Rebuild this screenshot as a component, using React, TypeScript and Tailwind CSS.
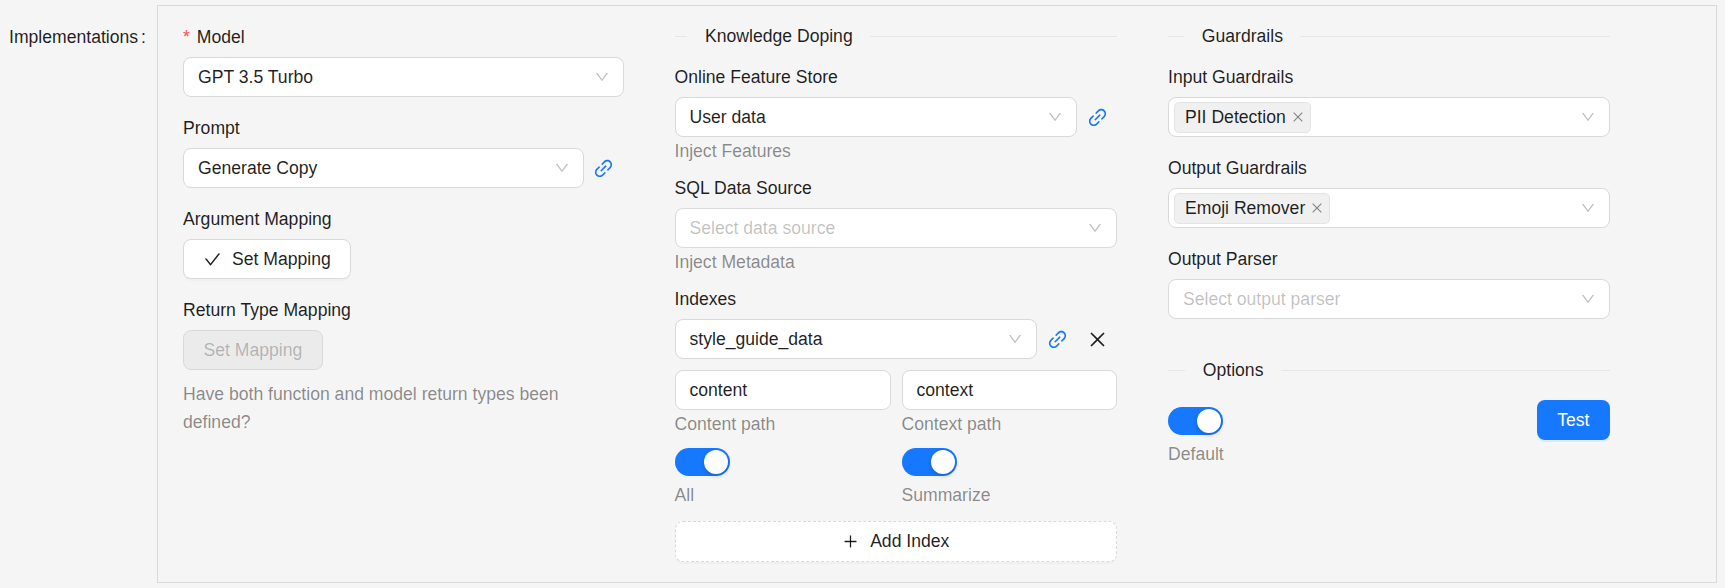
import React from "react";
import { AiOutlineCheck, AiOutlineClose, AiOutlineDown, AiOutlineLink, AiOutlinePlus } from "react-icons/ai";

function Select({
  value,
  placeholder,
  tag,
  className = "",
}: {
  value?: string;
  placeholder?: string;
  tag?: string;
  className?: string;
}) {
  return (
    <div
      className={`flex h-10 min-w-0 flex-1 items-center justify-between rounded-lg border border-[#d9d9d9] bg-white pr-[13px] ${
        tag ? "pl-[5px]" : "pl-[14px]"
      } ${className}`}
    >
      {tag ? (
        <span className="flex h-[31px] items-center gap-[5px] rounded-[5px] border border-[#e4e4e4] bg-[#f0f0f0] pl-[10px] pr-[5px] text-[rgba(0,0,0,0.88)]">
          {tag}
          <AiOutlineClose size={14} className="text-[rgba(0,0,0,0.45)]" />
        </span>
      ) : (
        <span className={value ? "text-[rgba(0,0,0,0.88)]" : "text-[rgba(0,0,0,0.25)]"}>{value || placeholder}</span>
      )}
      <AiOutlineDown size={16} className="text-[rgba(0,0,0,0.25)]" />
    </div>
  );
}

function LinkBtn() {
  return (
    <span className="flex h-10 w-10 shrink-0 items-center justify-center text-[#1677ff]">
      <AiOutlineLink size={23} />
    </span>
  );
}

function Label({ children }: { children: React.ReactNode }) {
  return <div className="h-6 leading-[26px] text-[rgba(0,0,0,0.88)]">{children}</div>;
}

function Field({
  label,
  extra,
  children,
  className = "mb-[18px]",
}: {
  label: React.ReactNode;
  extra?: string;
  children: React.ReactNode;
  className?: string;
}) {
  return (
    <div className={className}>
      <Label>{label}</Label>
      <div className="mt-[9px] flex items-center">{children}</div>
      {extra && <Extra>{extra}</Extra>}
    </div>
  );
}

function Extra({ children }: { children: React.ReactNode }) {
  return <div className="pt-[2px] leading-6 text-[rgba(0,0,0,0.45)]">{children}</div>;
}

function SectionTitle({ title, className = "" }: { title: string; className?: string }) {
  return (
    <div className={`flex h-6 items-center ${className}`}>
      <div className="flex-[5_5_0%] border-t border-[rgba(5,5,5,0.06)]" />
      <span className="px-[17.5px] leading-[26px] text-[rgba(0,0,0,0.88)]">{title}</span>
      <div className="flex-[95_95_0%] border-t border-[rgba(5,5,5,0.06)]" />
    </div>
  );
}

function Toggle({ label }: { label: string }) {
  return (
    <div>
      <div className="flex h-7 w-[55px] items-center justify-end rounded-full bg-[#1677ff] pr-[2px]">
        <span className="h-6 w-6 rounded-full bg-white shadow-[0_2px_4px_0_rgba(0,35,11,0.2)]" />
      </div>
      <div className="mt-[7px] leading-6 text-[rgba(0,0,0,0.45)]">{label}</div>
    </div>
  );
}

function TextInput({ value }: { value: string }) {
  return (
    <div className="flex h-10 items-center rounded-lg border border-[#d9d9d9] bg-white px-[14px] text-[rgba(0,0,0,0.88)]">
      {value}
    </div>
  );
}

export default function App() {
  return (
    <div
      className="flex min-h-[588px] items-start bg-[#f5f5f5] pt-[5px] text-[17.6px]"
      style={{ fontFamily: '"Liberation Sans", Arial, sans-serif' }}
    >
      <div className="flex h-[62px] w-[157px] items-start pl-[9px] pt-[20px] leading-6 text-[rgba(0,0,0,0.88)]">
        Implementations<span className="ml-[3px]">:</span>
      </div>

      <div className="grid w-[1560px] grid-cols-[440.5px_442.5px_442px] gap-x-[51px] border border-[#d9d9d9] pb-5 pl-[25px] pt-[18px]">
        {/* Model column */}
        <div>
          <Field
            label={
              <>
                <span className="mr-[2px] text-[#ff4d4f]">*</span> Model
              </>
            }
          >
            <Select value="GPT 3.5 Turbo" />
          </Field>
          <Field label="Prompt">
            <Select value="Generate Copy" />
            <LinkBtn />
          </Field>
          <Field label="Argument Mapping">
            <button className="flex h-10 items-center gap-[10px] rounded-lg border border-[#d9d9d9] bg-white px-[19px] text-[rgba(0,0,0,0.88)] shadow-[0_2px_0_rgba(0,0,0,0.02)]">
              <AiOutlineCheck size={19} />
              Set Mapping
            </button>
          </Field>
          <Field label="Return Type Mapping" className="mb-[11px]">
            <button
              disabled
              className="flex h-10 items-center rounded-lg border border-[#d9d9d9] bg-[rgba(0,0,0,0.04)] px-[19.5px] text-[rgba(0,0,0,0.25)]"
            >
              Set Mapping
            </button>
          </Field>
          <p className="leading-[27.5px] text-[rgba(0,0,0,0.45)]">Have both function and model return types been defined?</p>
        </div>

        {/* Knowledge doping column */}
        <div>
          <SectionTitle title="Knowledge Doping" className="mb-4" />
          <Field label="Online Feature Store" extra="Inject Features" className="mb-[12px]">
            <Select value="User data" />
            <LinkBtn />
          </Field>
          <Field label="SQL Data Source" extra="Inject Metadata" className="mb-[12px]">
            <Select placeholder="Select data source" />
          </Field>
          <Label>Indexes</Label>
          <div className="mt-[9px] flex items-center">
            <Select value="style_guide_data" />
            <LinkBtn />
            <span className="flex h-10 w-10 shrink-0 items-center justify-center text-[rgba(0,0,0,0.88)]">
              <AiOutlineClose size={21} />
            </span>
          </div>
          <div className="mt-[11px] grid grid-cols-[216.5px_215.5px] gap-x-[10.5px]">
            <div>
              <TextInput value="content" />
              <Extra>Content path</Extra>
            </div>
            <div>
              <TextInput value="context" />
              <Extra>Context path</Extra>
            </div>
          </div>
          <div className="mt-[12px] grid grid-cols-[216.5px_215.5px] gap-x-[10.5px]">
            <Toggle label="All" />
            <Toggle label="Summarize" />
          </div>
          <button className="mt-[14px] flex h-[41px] w-full items-center justify-center gap-[11px] rounded-lg border border-dashed border-[#d9d9d9] bg-white text-[rgba(0,0,0,0.88)] shadow-[0_2px_0_rgba(0,0,0,0.02)]">
            <AiOutlinePlus size={17} />
            Add Index
          </button>
        </div>

        {/* Guardrails column */}
        <div>
          <SectionTitle title="Guardrails" className="mb-4" />
          <Field label="Input Guardrails">
            <Select tag="PII Detection" />
          </Field>
          <Field label="Output Guardrails">
            <Select tag="Emoji Remover" />
          </Field>
          <Field label="Output Parser" className="mb-[39px]">
            <Select placeholder="Select output parser" />
          </Field>
          <SectionTitle title="Options" className="mb-[18px]" />
          <div className="flex items-start justify-between">
            <div className="pt-[7px]">
              <Toggle label="Default" />
            </div>
            <button className="flex h-10 items-center rounded-lg bg-[#1677ff] px-[20.5px] text-white shadow-[0_2px_0_rgba(5,145,255,0.1)]">
              Test
            </button>
          </div>
        </div>
      </div>
    </div>
  );
}
